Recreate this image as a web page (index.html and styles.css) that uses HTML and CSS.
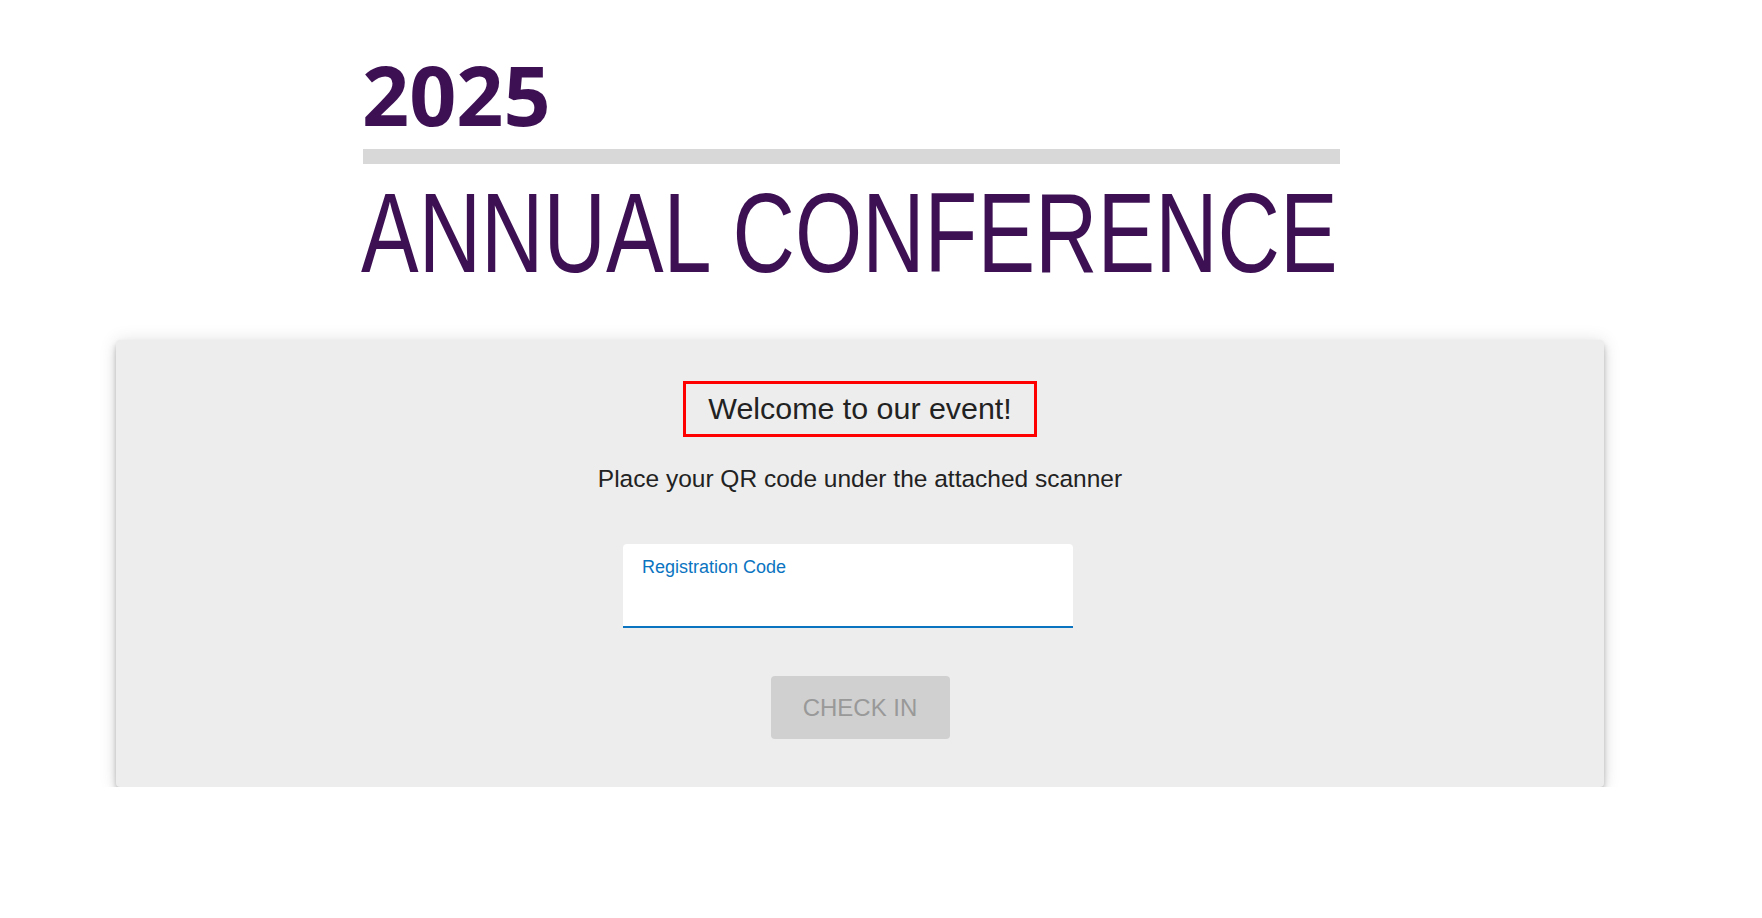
FILE: index.html
```html
<!DOCTYPE html>
<html lang="en">
<head>
    <meta charset="UTF-8">
    <meta name="viewport" content="width=device-width, initial-scale=1.0">
    <title>Annual Conference Check-in</title>
    <link rel="stylesheet" href="styles.css">
</head>
<body>

    <div class="cabecera">
        <div class="anio">2025</div>
        <div class="barra"></div>
        <div class="evento">ANNUAL CONFERENCE</div>
    </div>

    <form class="tarjeta" id="formulario">
        <div class="bienvenida">Welcome to our event!</div>
        <p class="instruccion">Place your QR code under the attached scanner</p>

        <div class="campo">
            <label for="codigo">Registration Code</label>
            <input type="text" id="codigo" name="codigo" autocomplete="off">
        </div>

        <button type="submit" disabled>CHECK IN</button>
    </form>

</body>
</html>
```

FILE: styles.css
```css
body { margin: 0; font-family: "Liberation Sans", Arial, sans-serif; color: #222; background: #fff; }

.cabecera { margin-left: 361px; padding-top: 52px; width: 980px; }
.anio { font-family: "Open Sans", sans-serif; font-weight: bold; font-size: 82.5px; line-height: 84px; color: #3c1053; padding-left: 1px; }
.barra { height: 15px; background: #d8d8d8; margin-top: 13px; margin-left: 2px; width: 977px; }
.evento {
    font-family: "Liberation Sans", Arial, sans-serif;
    font-size: 113px;
    line-height: 113px;
    color: #3c1053;
    margin-top: 13px;
    white-space: nowrap;
    transform: scaleX(0.765);
    transform-origin: left center;
}

.tarjeta {
    margin: 50px 0 0 116px;
    width: 1488px;
    box-sizing: border-box;
    padding: 41px 0 48px;
    background: #ededed;
    border-radius: 4px;
    box-shadow: 0 3px 5px -1px rgba(0,0,0,.2), 0 6px 10px 0 rgba(0,0,0,.14), 0 1px 18px 0 rgba(0,0,0,.12);
    display: flex;
    flex-direction: column;
    align-items: center;
}

.bienvenida {
    border: 3px solid #f00;
    padding: 7px 22px 8px;
    font-size: 30.4px;
    line-height: 35px;
}

.instruccion { margin: 28px 0 0; font-size: 24.5px; line-height: 28px; }

.campo {
    margin-top: 51px;
    margin-right: 24px;
    width: 450px;
    box-sizing: border-box;
    padding: 13px 19px 0;
    background: #fff;
    border-radius: 4px 4px 0 0;
    border-bottom: 2px solid #0b74c1;
}
.campo label { display: block; font-size: 18px; line-height: 21px; color: #0b74c1; }
.campo input { display: block; width: 100%; height: 48px; border: none; outline: none; background: transparent; padding: 0; font-size: 18px; font-family: inherit; }

button {
    margin-top: 48px;
    width: 179px;
    height: 63px;
    border: none;
    border-radius: 4px;
    background: #d0d0d0;
    color: #999;
    font-family: inherit;
    font-size: 24px;
}
```
